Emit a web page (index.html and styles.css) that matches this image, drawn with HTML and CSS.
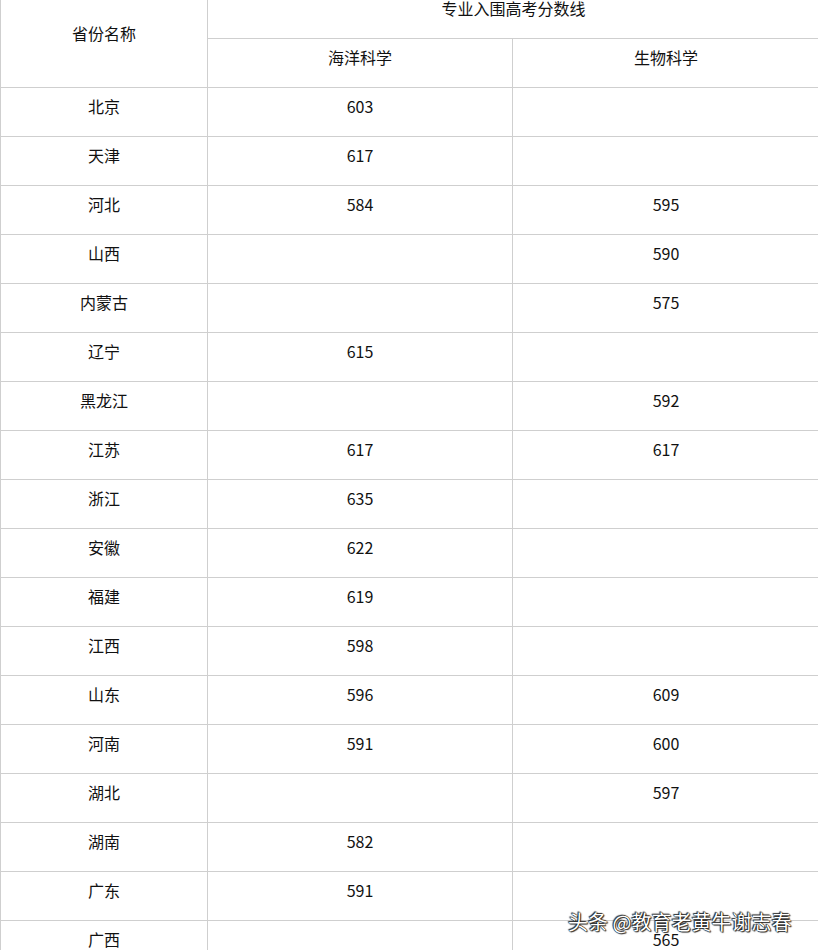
FILE: index.html
```html
<!DOCTYPE html>
<html lang="zh">
<head>
<meta charset="utf-8">
<link rel="stylesheet" href="styles.css">
</head>
<body>
<div class="page">
<table class="score-table">
  <colgroup>
    <col class="c1"><col class="c2"><col class="c3">
  </colgroup>
  <thead>
    <tr>
      <th rowspan="2" class="tall">省份名称</th>
      <th colspan="2" class="top">专业入围高考分数线</th>
    </tr>
    <tr>
      <th>海洋科学</th>
      <th>生物科学</th>
    </tr>
  </thead>
  <tbody>
    <tr><td>北京</td><td>603</td><td></td></tr>
    <tr><td>天津</td><td>617</td><td></td></tr>
    <tr><td>河北</td><td>584</td><td>595</td></tr>
    <tr><td>山西</td><td></td><td>590</td></tr>
    <tr><td>内蒙古</td><td></td><td>575</td></tr>
    <tr><td>辽宁</td><td>615</td><td></td></tr>
    <tr><td>黑龙江</td><td></td><td>592</td></tr>
    <tr><td>江苏</td><td>617</td><td>617</td></tr>
    <tr><td>浙江</td><td>635</td><td></td></tr>
    <tr><td>安徽</td><td>622</td><td></td></tr>
    <tr><td>福建</td><td>619</td><td></td></tr>
    <tr><td>江西</td><td>598</td><td></td></tr>
    <tr><td>山东</td><td>596</td><td>609</td></tr>
    <tr><td>河南</td><td>591</td><td>600</td></tr>
    <tr><td>湖北</td><td></td><td>597</td></tr>
    <tr><td>湖南</td><td>582</td><td></td></tr>
    <tr><td>广东</td><td>591</td><td></td></tr>
    <tr><td>广西</td><td></td><td>565</td></tr>
  </tbody>
</table>
<div class="watermark">头条 @教育老黄牛谢志春</div>
</div>
</body>
</html>
```

FILE: styles.css
```css
html, body {
  margin: 0;
  padding: 0;
  background: #fff;
}
body {
  width: 818px;
  height: 950px;
  overflow: hidden;
  font-family: "Noto Sans CJK SC", "Noto Sans", sans-serif;
  color: #111;
}
.page {
  position: relative;
  width: 818px;
  height: 950px;
  overflow: hidden;
}
.score-table {
  border-collapse: collapse;
  table-layout: fixed;
  width: 819px;
  margin-top: -11px;
}
.c1 { width: 207px; }
.c2 { width: 305px; }
.c3 { width: 307px; }
.score-table th,
.score-table td {
  border: 1px solid #cfcfcf;
  height: 49px;
  box-sizing: border-box;
  padding: 0 0 12px 0;
  text-align: center;
  vertical-align: middle;
  font-size: 16px;
  font-weight: normal;
  line-height: 24px;
}
.watermark {
  position: absolute;
  left: 568px;
  top: 907px;
  font-size: 20px;
  line-height: 30px;
  color: #fff;
  white-space: nowrap;
  text-shadow: 0 0 1px #000, 0 0 1px #000, 1px 1px 1px #333, -1px -1px 1px #333;
}
```
